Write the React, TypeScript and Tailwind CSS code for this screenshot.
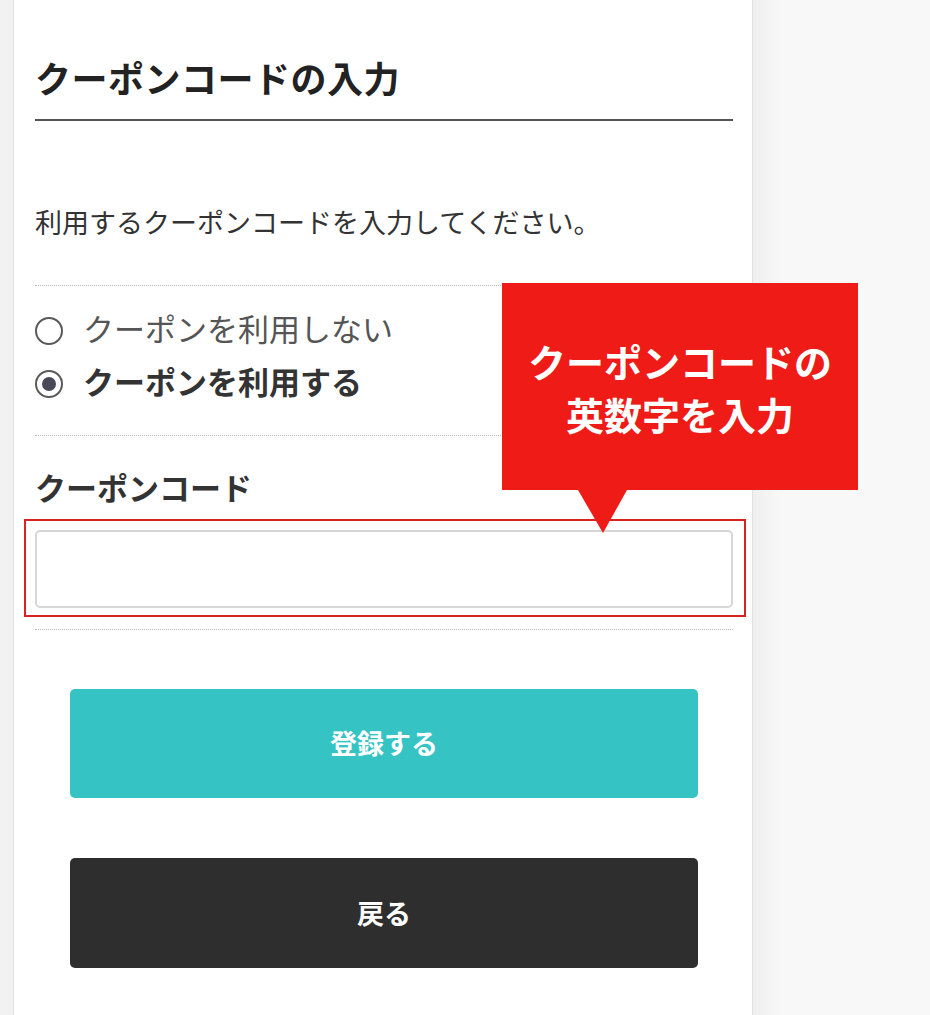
import { useState } from 'react';

const FONT = "font-['Noto_Sans_CJK_JP','Noto_Sans',sans-serif]";

function Radio({ checked, label, onSelect }: { checked: boolean; label: string; onSelect: () => void }) {
  return (
    <label className="flex items-center h-[40px] cursor-pointer" onClick={onSelect}>
      <span className="w-[28px] h-[28px] rounded-full border-2 border-[#5a5a5a] bg-white flex items-center justify-center shrink-0">
        {checked && <span className="w-[14px] h-[14px] rounded-full bg-[#484858]" />}
      </span>
      <span
        className={`ml-[20px] pb-[6px] text-[31px] leading-[40px] ${checked ? 'font-bold text-[#333]' : 'text-[#555]'}`}
      >
        {label}
      </span>
    </label>
  );
}

export default function App() {
  const [useCoupon, setUseCoupon] = useState(true);
  const [code, setCode] = useState('');

  return (
    <div className={`relative flex h-[1015px] overflow-hidden bg-[#f7f7f7] ${FONT}`}>
      {/* 左の余白 */}
      <div className="w-[13px] shrink-0 bg-[#f2f2f2]" />

      {/* メインパネル */}
      <div className="w-[740px] shrink-0 bg-white border-l border-r border-[#e2e2e2] pl-[21px] pr-[19px]">
        <h1 className="pt-[57px] pb-[22px] text-[36px] tracking-[0.5px] leading-[40px] font-bold text-[#222] border-b-2 border-[#555]">
          クーポンコードの入力
        </h1>

        <p className="mt-[86px] text-[27px] leading-[30px] text-[#333]">
          利用するクーポンコードを入力してください。
        </p>

        <div className="mt-[48px] border-t border-dotted border-[#b8b8b8]" />

        <div className="mt-[25px] flex flex-col gap-[13px]">
          <Radio checked={!useCoupon} label="クーポンを利用しない" onSelect={() => setUseCoupon(false)} />
          <Radio checked={useCoupon} label="クーポンを利用する" onSelect={() => setUseCoupon(true)} />
        </div>

        <div className="mt-[31px] border-t border-dotted border-[#b8b8b8]" />

        <div className="mt-[33px] text-[31px] leading-[36px] font-bold text-[#333]">クーポンコード</div>

        {/* 入力欄（赤枠で強調） */}
        <div className="mt-[14px] -ml-[11px] -mr-[13px] border-2 border-[#d92323] pt-[9px] pb-[7px] pl-[9px] pr-[11px]">
          <input
            value={code}
            onChange={(e) => setCode(e.target.value)}
            className="block w-full h-[78px] rounded-[5px] border-2 border-[#d6d6d6] bg-white px-3 text-[27px] outline-none"
          />
        </div>

        <div className="mt-[12px] border-t border-dotted border-[#b8b8b8]" />

        <div className="px-[35px]">
          <button className="mt-[59px] w-full h-[109px] rounded-[5px] bg-[#35c3c4] text-white text-[27px] font-bold">
            登録する
          </button>
          <button className="mt-[60px] w-full h-[110px] rounded-[5px] bg-[#2e2e2e] text-white text-[27px] font-bold">
            戻る
          </button>
        </div>
      </div>

      {/* 右の背景 */}
      <div className="flex-1 bg-[linear-gradient(to_right,#efefef,#f8f8f8_30px)]" />

      {/* 吹き出し */}
      <div className="absolute left-[502px] top-[283px] w-[356px] h-[207px] bg-[#ee1b16] flex items-center justify-center">
        <p className="text-center text-white text-[38px] leading-[53px] font-bold">
          クーポンコードの
          <br />
          英数字を入力
        </p>
        <div className="absolute left-[76px] top-[207px] w-0 h-0 border-l-[25px] border-r-[24px] border-t-[43px] border-l-transparent border-r-transparent border-t-[#ee1b16]" />
      </div>
    </div>
  );
}
